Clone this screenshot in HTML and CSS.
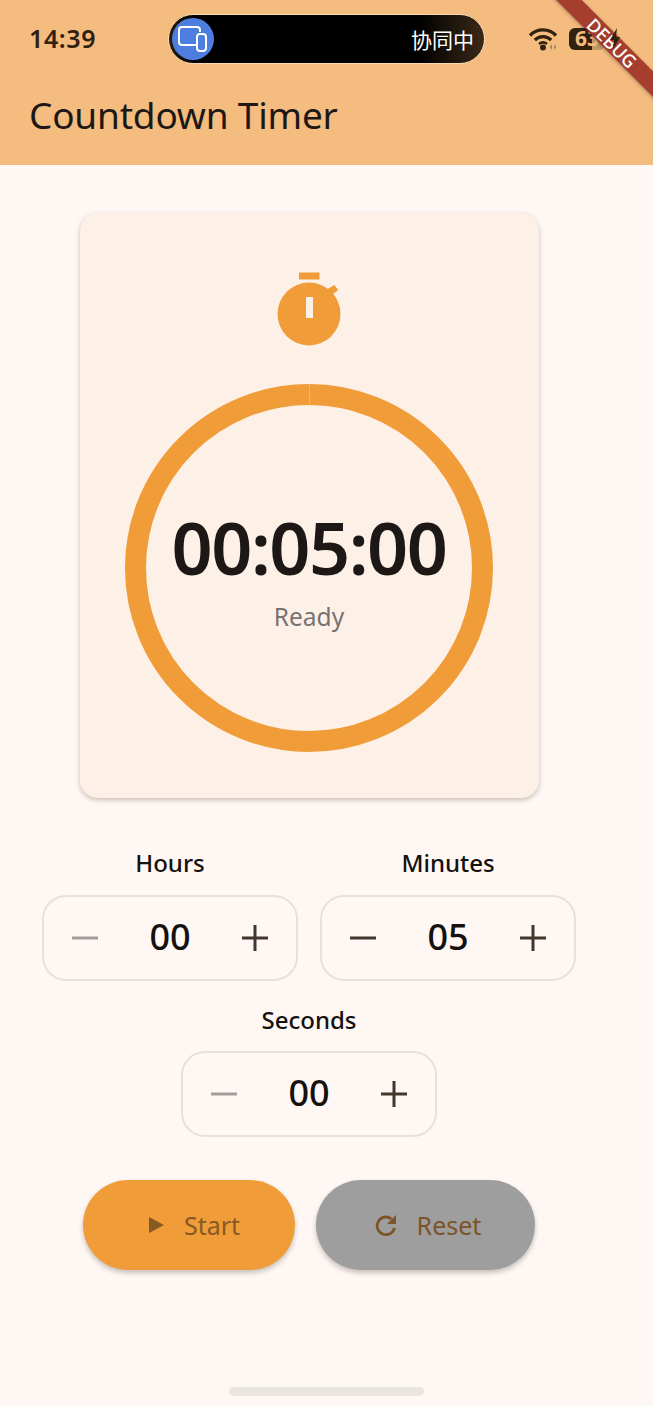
FILE: index.html
```html
<!DOCTYPE html>
<html lang="en">
<head>
    <meta charset="UTF-8">
    <meta name="viewport" content="width=device-width, initial-scale=1.0">
    <title>Countdown Timer</title>
    <link rel="stylesheet" href="styles.css">
</head>
<body>
    <header class="appBar">
        <div class="statusBar">
            <div class="clock">14:39</div>
            <div class="island">
                <div class="islandIcon">
                    <svg width="32" height="28" viewBox="0 0 32 28" fill="none" stroke="#fff" stroke-width="2">
                        <path d="M19 20H5a3 3 0 0 1-3-3V5a3 3 0 0 1 3-3h15a3 3 0 0 1 3 3v2"/>
                        <rect x="20" y="9" width="9" height="17" rx="3"/>
                    </svg>
                </div>
                <div class="islandText">协同中</div>
            </div>
            <div class="statusIcons">
                <svg class="wifi" width="32" height="24" viewBox="0 0 32 24">
                    <path d="M1 8.500C8 1 20 1 27 8.500" fill="none" stroke="#33210f" stroke-width="3.400"/>
                    <path d="M5.800 13C10.500 8.500 17.500 8.500 22.200 13" fill="none" stroke="#33210f" stroke-width="3.200"/>
                    <path d="M10 17C12.500 15 15.500 15 18 17" fill="none" stroke="#33210f" stroke-width="2.800"/>
                    <circle cx="14" cy="20.500" r="3" fill="#33210f"/>
                    <path d="M23 17v6l-2.500-3zM25 17v6l2.500-3z" fill="#a9875f"/>
                </svg>
                <div class="battery">
                    <div class="batteryFill" style="width: 63%"></div>
                    <span class="batteryText">63</span>
                </div>
                <svg class="bolt" width="12" height="22" viewBox="0 0 12 22">
                    <path d="M8 0L1 12h4l-1 10 7-13H7z" fill="#33210f"/>
                </svg>
            </div>
        </div>
        <h1 class="pageTitle">Countdown Timer</h1>
    </header>

    <main class="content">
        <section class="timerCard">
            <svg class="stopwatch" width="64" height="74" viewBox="0 0 64 74">
                <rect x="22" y="0.500" width="20.500" height="7" fill="#f09c38"/>
                <circle cx="32" cy="42" r="31.500" fill="#f09c38"/>
                <path d="M50.300 17.300l7-4.300 4 5-6.600 5z" fill="#f09c38"/>
                <rect x="29" y="25" width="7" height="21" fill="#fdf1e7"/>
            </svg>
            <div class="ring">
                <div class="ringSeam"></div>
                <div class="timeText">00:05:00</div>
                <div class="statusText">Ready</div>
            </div>
        </section>

        <div class="pickerRow">
            <div class="picker">
                <div class="pickerLabel">Hours</div>
                <div class="stepper">
                    <svg class="stepIcon off" width="26" height="26" viewBox="0 0 26 26"><path d="M0 13h26"/></svg>
                    <span class="stepValue">00</span>
                    <svg class="stepIcon" width="26" height="26" viewBox="0 0 26 26"><path d="M0 13h26M13 0v26"/></svg>
                </div>
            </div>
            <div class="picker">
                <div class="pickerLabel">Minutes</div>
                <div class="stepper">
                    <svg class="stepIcon" width="26" height="26" viewBox="0 0 26 26"><path d="M0 13h26"/></svg>
                    <span class="stepValue">05</span>
                    <svg class="stepIcon" width="26" height="26" viewBox="0 0 26 26"><path d="M0 13h26M13 0v26"/></svg>
                </div>
            </div>
        </div>
        <div class="pickerRow second">
            <div class="picker">
                <div class="pickerLabel">Seconds</div>
                <div class="stepper">
                    <svg class="stepIcon off" width="26" height="26" viewBox="0 0 26 26"><path d="M0 13h26"/></svg>
                    <span class="stepValue">00</span>
                    <svg class="stepIcon" width="26" height="26" viewBox="0 0 26 26"><path d="M0 13h26M13 0v26"/></svg>
                </div>
            </div>
        </div>

        <div class="actions">
            <div class="actionBtn startBtn">
                <svg width="15" height="18" viewBox="0 0 15 18"><path d="M0 1L15 9 0 17z" fill="#875a24"/></svg>
                <span>Start</span>
            </div>
            <div class="actionBtn resetBtn">
                <svg width="22" height="24" viewBox="0 0 22 24" fill="none">
                    <path d="M19.500 15A8.800 8.800 0 1 1 16.500 6" stroke="#7c5428" stroke-width="2.800"/>
                    <path d="M21 2v9h-9z" fill="#7c5428"/>
                </svg>
                <span>Reset</span>
            </div>
        </div>
    </main>

    <div class="homeBar"></div>

    <div class="bannerClip">
        <div class="debugBanner">DEBUG</div>
    </div>
</body>
</html>
```

FILE: styles.css
```css
* {
    box-sizing: border-box;
}

html, body {
    margin: 0;
    padding: 0;
}

body {
    position: relative;
    width: 653px;
    height: 1406px;
    overflow: hidden;
    background-color: #fef7f4;
    color: #1d1815;
    font-family: "Noto Sans", Roboto, sans-serif;
}

.appBar {
    height: 165px;
    padding: 14px 0 0 29px;
    background-color: #f4bc7f;
}

.statusBar {
    display: flex;
    align-items: center;
    height: 50px;
}

.clock {
    flex: none;
    width: 139px;
    margin-top: -3px;
    font-size: 25px;
    font-weight: 600;
    letter-spacing: 0.6px;
    color: #33210f;
}

.island {
    flex: none;
    display: flex;
    align-items: center;
    justify-content: space-between;
    width: 317px;
    height: 50px;
    padding: 0 10px 0 3px;
    border: 1px solid #f9d9ae;
    border-radius: 25px;
    background: linear-gradient(90deg, #2a1c0e 0, #000 26px, #000 250px, #3a2a18 100%);
}

.islandIcon {
    display: flex;
    align-items: center;
    justify-content: center;
    width: 42px;
    height: 42px;
    border-radius: 50%;
    background-color: #4d7ddf;
}

.islandText {
    font-family: "Noto Sans CJK SC", sans-serif;
    font-size: 21px;
    color: #fff;
}

.statusIcons {
    flex: none;
    display: flex;
    align-items: center;
    margin-left: 44px;
}

.battery {
    position: relative;
    width: 36px;
    height: 22px;
    margin-left: 8px;
    border-radius: 6px;
    background-color: #c49a68;
}

.batteryFill {
    height: 100%;
    border-radius: 6px 0 0 6px;
    background-color: #33210f;
}

.batteryText {
    position: absolute;
    top: -4px;
    left: 6px;
    font-size: 21px;
    font-weight: 700;
    color: #f4bc7f;
}

.bolt {
    position: relative;
    z-index: 2;
    margin-left: 4px;
}

.pageTitle {
    margin: 27px 0 0;
    font-size: 37px;
    font-weight: 400;
    line-height: 48px;
    letter-spacing: -0.2px;
}

.content {
    display: flex;
    flex-direction: column;
    align-items: center;
    width: 618px;
    padding-top: 48px;
}

.timerCard {
    display: flex;
    flex-direction: column;
    align-items: center;
    width: 459px;
    height: 585px;
    padding-top: 59px;
    border-radius: 18px;
    background-color: #fdf1e7;
    box-shadow: 0 2px 5px rgba(80, 60, 40, 0.3);
}

.stopwatch {
    flex: none;
}

.ring {
    position: relative;
    display: flex;
    flex-direction: column;
    align-items: center;
    justify-content: center;
    width: 368px;
    height: 368px;
    margin-top: 38px;
    border: 21px solid #f09c38;
    border-radius: 50%;
}

.ringSeam {
    position: absolute;
    top: -21px;
    left: 162.500px;
    width: 1px;
    height: 21px;
    background-color: #f6b565;
}

.timeText {
    margin-top: 2px;
    font-size: 72px;
    font-weight: 600;
    line-height: 84px;
    letter-spacing: -1.500px;
}

.statusText {
    margin-top: 12px;
    font-size: 24.500px;
    line-height: 32px;
    color: #777370;
}

.pickerRow {
    display: flex;
    justify-content: center;
    gap: 22px;
    margin-top: 49px;
}

.pickerRow.second {
    margin-top: 23px;
}

.picker {
    display: flex;
    flex-direction: column;
    align-items: center;
    gap: 16px;
}

.pickerRow.second .picker {
    gap: 15px;
}

.pickerLabel {
    font-size: 24px;
    font-weight: 500;
    line-height: 32px;
    color: #14110f;
}

.stepper {
    display: flex;
    align-items: center;
    justify-content: space-between;
    width: 256px;
    height: 86px;
    padding: 0 28px;
    border: 2px solid #e6e1dd;
    border-radius: 24px;
}

.stepIcon {
    fill: none;
    stroke: #43362c;
    stroke-width: 3;
}

.stepIcon.off {
    stroke: #a29e9b;
}

.stepValue {
    margin-top: -2px;
    font-size: 36px;
    font-weight: 500;
    line-height: 44px;
    color: #14110f;
}

.actions {
    display: flex;
    gap: 21px;
    margin-top: 43px;
}

.actionBtn {
    display: flex;
    align-items: center;
    justify-content: center;
    gap: 20px;
    height: 90px;
    border-radius: 45px;
    font-size: 25px;
    box-shadow: 0 3px 5px rgba(60, 50, 40, 0.28);
}

.startBtn {
    width: 212px;
    padding-left: 11px;
    background-color: #f09c38;
    color: #875a24;
}

.resetBtn {
    width: 219px;
    padding-left: 5px;
    background-color: #9e9e9e;
    color: #7c5428;
}

.homeBar {
    position: absolute;
    left: 229px;
    bottom: 10px;
    width: 195px;
    height: 9px;
    border-radius: 5px;
    background-color: #e9e5e1;
}

.bannerClip {
    position: absolute;
    top: 0;
    right: 0;
    width: 110px;
    height: 110px;
    overflow: hidden;
}

.debugBanner {
    position: absolute;
    top: 34px;
    left: -31px;
    width: 200px;
    height: 18px;
    transform: rotate(45deg);
    background-color: rgba(150, 40, 30, 0.85);
    box-shadow: 0 1px 4px rgba(0, 0, 0, 0.3);
    color: #fff;
    font-size: 18px;
    font-weight: 500;
    line-height: 18px;
    text-align: center;
}
```
